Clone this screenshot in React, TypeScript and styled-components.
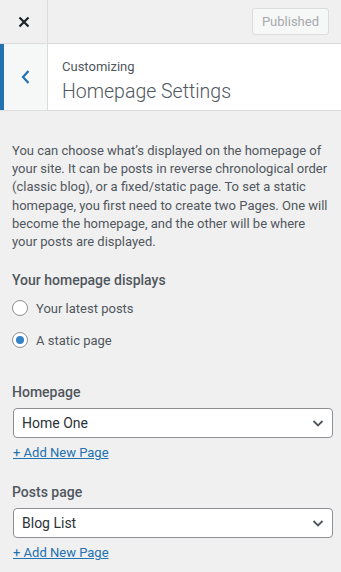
import React from 'react';
import styled, { createGlobalStyle } from 'styled-components';

const GlobalStyle = createGlobalStyle`
  html, body {
    margin: 0;
    padding: 0;
    background: #f0f0f0;
  }
  body {
    font-family: Roboto, "Liberation Sans", sans-serif;
    font-size: 13px;
    color: #50575e;
  }
`;

const Panel = styled.div`
  width: 341px;
  height: 572px;
  background: #f0f0f0;
  overflow: hidden;
`;

const TopBar = styled.div`
  display: flex;
  align-items: center;
  height: 44px;
  box-sizing: border-box;
  border-bottom: 1px solid #dcdcde;
  background: #f0f0f0;
`;

const CloseButton = styled.button`
  width: 48px;
  height: 43px;
  border: 0;
  border-right: 1px solid #dcdcde;
  background: transparent;
  display: flex;
  align-items: center;
  justify-content: center;
  padding: 0;
  color: #1d2327;
`;

const PublishButton = styled.button`
  margin-left: auto;
  margin-right: 12px;
  height: 27px;
  padding: 0 9px;
  border: 1px solid #dcdcde;
  border-radius: 3px;
  background: #f6f7f7;
  color: #a7aaad;
  font-family: inherit;
  font-size: 13px;
`;

const TitleSection = styled.div`
  display: flex;
  height: 67px;
  background: #fff;
  border-bottom: 1px solid #dcdcde;
  box-sizing: border-box;
`;

const BackButton = styled.button`
  width: 48px;
  height: 100%;
  border: 0;
  border-left: 4px solid #2271b1;
  border-right: 1px solid #dcdcde;
  background: #f6f7f7;
  display: flex;
  align-items: center;
  justify-content: center;
  padding: 0;
  color: #2271b1;
`;

const TitleText = styled.div`
  display: flex;
  flex-direction: column;
  padding: 14px 0 0 14px;
`;

const Crumb = styled.span`
  font-size: 13px;
  line-height: 18px;
  color: #50575e;
`;

const Heading = styled.h3`
  margin: 4px 0 0;
  font-size: 19.5px;
  font-weight: 300;
  line-height: 24px;
  color: #50575e;
`;

const Content = styled.div`
  padding: 31px 8px 0 12px;
`;

const Description = styled.p`
  margin: 0 4px 0 0;
  line-height: 18.2px;
  color: #50575e;
`;

const GroupTitle = styled.div`
  margin-top: 19px;
  font-size: 14px;
  font-weight: 500;
  color: #50575e;
  line-height: 20px;
`;

const RadioGroup = styled.div`
  margin-top: 2px;
`;

const RadioRow = styled.label`
  display: flex;
  align-items: center;
  gap: 8px;
  height: 32px;
  font-size: 13px;
  color: #50575e;
`;

const RadioCircle = styled.span<{ checked?: boolean }>`
  width: 16px;
  height: 16px;
  box-sizing: border-box;
  border: 1px solid #8c8f94;
  border-radius: 50%;
  background: #fff;
  display: flex;
  align-items: center;
  justify-content: center;
  &::after {
    content: '';
    display: ${p => (p.checked ? 'block' : 'none')};
    width: 8px;
    height: 8px;
    border-radius: 50%;
    background: #3582c4;
  }
`;

const Field = styled.div<{ top: number }>`
  margin-top: ${p => p.top}px;
`;

const FieldLabel = styled.div`
  font-size: 14px;
  font-weight: 500;
  line-height: 20px;
  color: #50575e;
`;

const Select = styled.div`
  margin-top: 6px;
  margin-left: 1px;
  height: 30px;
  box-sizing: border-box;
  border: 1px solid #8c8f94;
  border-radius: 4px;
  background: #fff;
  display: flex;
  align-items: center;
  justify-content: space-between;
  padding: 0 8px;
  font-size: 14px;
  color: #2c3338;
`;

const AddLink = styled.a`
  display: inline-block;
  margin-top: 6px;
  margin-left: 1px;
  font-size: 13px;
  line-height: 18px;
  color: #2271b1;
  text-decoration: underline;
`;

const Chevron = () => (
  <svg width="12" height="12" viewBox="0 0 12 12" fill="none">
    <path d="M1.5 4l4.5 4.5 4.5-4.5" stroke="#50575e" strokeWidth="1.8" />
  </svg>
);

const SelectField = ({ label, value, top }: { label: string; value: string; top: number }) => (
  <Field top={top}>
    <FieldLabel>{label}</FieldLabel>
    <Select>
      <span>{value}</span>
      <Chevron />
    </Select>
    <AddLink href="#">+ Add New Page</AddLink>
  </Field>
);

const App: React.FC = () => {
  return (
    <Panel>
      <GlobalStyle />
      <TopBar>
        <CloseButton aria-label="Close">
          <svg width="12" height="12" viewBox="0 0 12 12">
            <path d="M1.5 1.5l9 9M10.5 1.5l-9 9" stroke="#1d2327" strokeWidth="2.2" />
          </svg>
        </CloseButton>
        <PublishButton>Published</PublishButton>
      </TopBar>
      <TitleSection>
        <BackButton aria-label="Back">
          <svg width="10" height="16" viewBox="0 0 10 16">
            <path d="M7.5 2L2 8l5.5 6" stroke="#2271b1" strokeWidth="2.2" fill="none" />
          </svg>
        </BackButton>
        <TitleText>
          <Crumb>Customizing</Crumb>
          <Heading>Homepage Settings</Heading>
        </TitleText>
      </TitleSection>
      <Content>
        <Description>
          You can choose what’s displayed on the homepage of your site. It can be posts in reverse
          chronological order (classic blog), or a fixed/static page. To set a static homepage, you
          first need to create two Pages. One will become the homepage, and the other will be where
          your posts are displayed.
        </Description>
        <GroupTitle>Your homepage displays</GroupTitle>
        <RadioGroup>
          <RadioRow>
            <RadioCircle />
            Your latest posts
          </RadioRow>
          <RadioRow>
            <RadioCircle checked />
            A static page
          </RadioRow>
        </RadioGroup>
        <SelectField label="Homepage" value="Home One" top={26} />
        <SelectField label="Posts page" value="Blog List" top={20} />
      </Content>
    </Panel>
  );
};

export default App;
